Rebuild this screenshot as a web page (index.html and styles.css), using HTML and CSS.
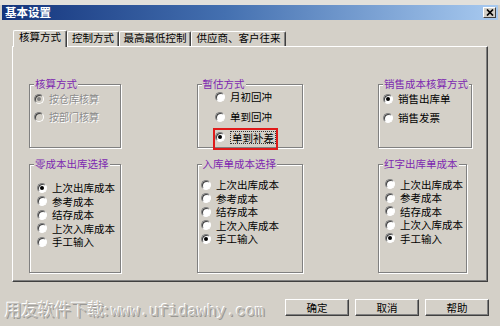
FILE: index.html
```html
<!DOCTYPE html>
<html lang="zh-CN">
<head>
    <meta charset="UTF-8">
    <title>基本设置</title>
    <link rel="stylesheet" href="styles.css">
</head>
<body>
    <div class="window">
        <div class="titlebar">
            <span class="title">基本设置</span>
            <span class="close">
                <svg width="8" height="7" viewBox="0 0 8 7"><path d="M1 0.5 L7 6.5 M7 0.5 L1 6.5" stroke="#000" stroke-width="1.7"/></svg>
            </span>
        </div>

        <div class="tabs">
            <div class="tab active tab-1">核算方式</div>
            <div class="tab tab-2">控制方式</div>
            <div class="tab tab-3">最高最低控制</div>
            <div class="tab tab-4">供应商、客户往来</div>
        </div>

        <div class="panel">
            <div class="group g-calc">
                <div class="group-title">核算方式</div>
                <div class="options">
                    <div class="option disabled"><span class="radio checked"></span>按仓库核算</div>
                    <div class="option disabled"><span class="radio"></span>按部门核算</div>
                </div>
            </div>

            <div class="group g-estimate">
                <div class="group-title">暂估方式</div>
                <div class="options">
                    <div class="option"><span class="radio"></span>月初回冲</div>
                    <div class="option"><span class="radio"></span>单到回冲</div>
                    <div class="option marked"><span class="radio checked"></span><span class="focus">单到补差</span></div>
                </div>
            </div>

            <div class="group g-sales">
                <div class="group-title">销售成本核算方式</div>
                <div class="options">
                    <div class="option"><span class="radio checked"></span>销售出库单</div>
                    <div class="option"><span class="radio"></span>销售发票</div>
                </div>
            </div>

            <div class="group g-zero">
                <div class="group-title">零成本出库选择</div>
                <div class="options">
                    <div class="option"><span class="radio checked"></span>上次出库成本</div>
                    <div class="option"><span class="radio"></span>参考成本</div>
                    <div class="option"><span class="radio"></span>结存成本</div>
                    <div class="option"><span class="radio"></span>上次入库成本</div>
                    <div class="option"><span class="radio"></span>手工输入</div>
                </div>
            </div>

            <div class="group g-inbound">
                <div class="group-title">入库单成本选择</div>
                <div class="options">
                    <div class="option"><span class="radio"></span>上次出库成本</div>
                    <div class="option"><span class="radio"></span>参考成本</div>
                    <div class="option"><span class="radio"></span>结存成本</div>
                    <div class="option"><span class="radio"></span>上次入库成本</div>
                    <div class="option"><span class="radio checked"></span>手工输入</div>
                </div>
            </div>

            <div class="group g-red">
                <div class="group-title">红字出库单成本</div>
                <div class="options">
                    <div class="option"><span class="radio"></span>上次出库成本</div>
                    <div class="option"><span class="radio"></span>参考成本</div>
                    <div class="option"><span class="radio"></span>结存成本</div>
                    <div class="option"><span class="radio"></span>上次入库成本</div>
                    <div class="option"><span class="radio checked"></span>手工输入</div>
                </div>
            </div>
        </div>

        <div class="footer">
            <div class="watermark"><span class="wm-cn">用友软件下载:</span> <span class="wm-en">www.ufidawhy.com</span></div>
            <div class="buttons">
                <button class="btn">确定</button>
                <button class="btn">取消</button>
                <button class="btn">帮助</button>
            </div>
        </div>
    </div>
</body>
</html>
```

FILE: styles.css
```css
body {
    margin: 0;
    width: 500px;
    height: 326px;
    overflow: hidden;
    background: #d4d0c8;
    font-family: "Noto Sans CJK SC", "Liberation Sans", sans-serif;
    font-size: 10.5px;
    color: #000;
}

.window {
    border-top: 5px solid #e2e0db;
}

/* title bar */
.titlebar {
    height: 15px;
    margin: 0 2px;
    padding: 0 2px 0 3px;
    display: flex;
    align-items: center;
    justify-content: space-between;
    background: linear-gradient(to right, #14347c, #4470b0 45%, #a8caf0);
}

.title {
    color: #fff;
    font-weight: bold;
    font-size: 11.5px;
    line-height: 15px;
}

.close {
    width: 13px;
    height: 11px;
    box-sizing: border-box;
    display: flex;
    align-items: center;
    justify-content: center;
    background: #d4d0c8;
    border: 1px solid;
    border-color: #fff #404040 #404040 #fff;
}

/* tabs */
.tabs {
    display: flex;
    align-items: flex-end;
    height: 16px;
    margin: 10px 0 0 13px;
}

.tab {
    height: 15px;
    box-sizing: border-box;
    padding-bottom: 2px;
    text-align: center;
    line-height: 12px;
    border-top: 1px solid #fff;
    border-left: 1px solid #fff;
    border-right: 1px solid #404040;
    box-shadow: inset -1px 0 0 #808080;
    border-radius: 2px 2px 0 0;
}

.tab.active {
    height: 17px;
    margin-bottom: -1px;
    padding-bottom: 3px;
    position: relative;
    z-index: 1;
    background: #d4d0c8;
}

.tab-1 { width: 54px; }
.tab-2 { width: 52px; }
.tab-3 { width: 72px; }
.tab-4 { width: 95px; }

/* panel with the six groups */
.panel {
    margin: 0 12px;
    height: 236px;
    box-sizing: border-box;
    border-top: 1px solid #fff;
    border-left: 1px solid #fff;
    border-right: 1px solid #404040;
    border-bottom: 1px solid #404040;
    box-shadow: inset -1px -1px 0 #808080;
    padding: 37px 15px 0 16px;
    display: grid;
    grid-template-columns: 92px 106px 94px;
    grid-template-rows: 64px 109px;
    row-gap: 16px;
    justify-content: space-between;
    align-content: start;
}

.group {
    box-sizing: border-box;
    border: 1px solid #808080;
    box-shadow: inset 1px 1px 0 #fff, 1px 1px 0 #fff;
}

.group-title {
    width: fit-content;
    margin: -6px 0 0 4px;
    padding: 0 1px;
    background: #d4d0c8;
    color: #7d28b0;
    line-height: 10px;
}

.options {
    display: flex;
    flex-direction: column;
}

.option {
    display: flex;
    align-items: center;
    gap: 5px;
    height: 14px;
    line-height: 14px;
    white-space: nowrap;
}

.option.disabled {
    color: #8c8c8c;
    text-shadow: 1px 1px 0 #fff;
}

.radio {
    flex: none;
    width: 10px;
    height: 10px;
    box-sizing: border-box;
    border-radius: 50%;
    border: 1px solid;
    border-color: #808080 #fff #fff #808080;
    background: #fff;
    box-shadow: inset 1px 1px 0 #404040;
    display: flex;
    align-items: center;
    justify-content: center;
}

.radio.checked::after {
    content: "";
    width: 4px;
    height: 4px;
    border-radius: 50%;
    background: #000;
}

.disabled .radio {
    background: #d4d0c8;
}

.disabled .radio.checked::after {
    background: #808080;
}

/* per-group spacing */
.g-calc .option {
    height: 10px;
    line-height: 10px;
    font-size: 10px;
}

.g-calc .options { margin-top: 5px; gap: 8px; padding-left: 4px; }
.g-estimate .options { margin-top: 1px; gap: 6px; padding-left: 17.5px; }
.g-sales .options { margin-top: 2.5px; gap: 5px; padding-left: 4px; }

.g-zero .option,
.g-inbound .option,
.g-red .option {
    height: 13.5px;
    line-height: 13.5px;
}

.g-zero .options { margin-top: 12px; padding-left: 7px; }
.g-inbound .options { margin-top: 9px; padding-left: 3.5px; }
.g-red { width: 89px; }
.g-red .options { margin-top: 8.5px; padding-left: 6px; }

.option.marked {
    width: fit-content;
    padding: 0 0 4px 0;
    outline: 2px solid #e01a1a;
}

.focus {
    border: 1px dotted #333;
    padding: 0 1px;
    line-height: 11px;
}

/* bottom row */
.footer {
    display: flex;
    align-items: flex-start;
    margin-top: 17px;
    padding: 0 11px 0 5px;
}

.watermark {
    margin-top: 1px;
    line-height: 18px;
    white-space: nowrap;
    color: #c2bfba;
    text-shadow: -1px -1px 0 #fff, 1px 1px 0 #9a9894;
}

.wm-cn {
    font-size: 16.5px;
}

.wm-en {
    font-family: "Liberation Mono", monospace;
    font-size: 16px;
}

.buttons {
    margin-left: auto;
    display: flex;
    gap: 6px;
}

.btn {
    width: 64px;
    height: 17px;
    padding: 0;
    background: #d4d0c8;
    border: 1px solid;
    border-color: #fff #404040 #404040 #fff;
    box-shadow: inset -1px -1px 0 #808080;
    font-family: "Noto Sans CJK SC", sans-serif;
    font-size: 10.5px;
    line-height: 14px;
    color: #000;
}
```
